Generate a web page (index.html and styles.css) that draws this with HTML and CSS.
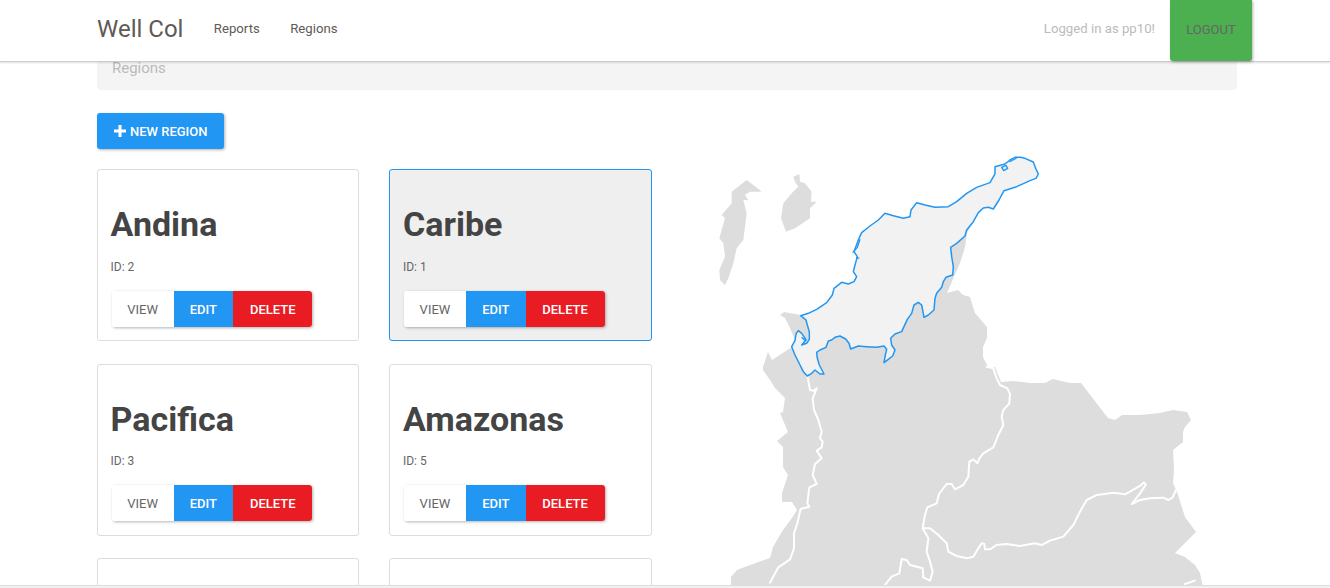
FILE: index.html
```html
<!DOCTYPE html>
<html lang="en">
<head>
<meta charset="utf-8">
<title>Well Col</title>
<link rel="stylesheet" href="styles.css">
</head>
<body>
<nav class="navbar">
  <div class="nav-inner">
    <a class="brand">Well Col</a>
    <a class="nav-link">Reports</a>
    <a class="nav-link">Regions</a>
    <span class="spacer"></span>
    <span class="logged">Logged in as pp10!</span>
    <a class="logout">LOGOUT</a>
  </div>
</nav>
<main class="page">
  <div class="crumb">Regions</div>
  <a class="new-btn"><svg class="plus" viewBox="0 0 12 12"><path d="M4.5 0h3v4.5H12v3H7.5V12h-3V7.5H0v-3h4.5z"/></svg>NEW REGION</a>
  <div class="content">
    <section class="cards">
      <article class="card">
        <h2>Andina</h2><p>ID: 2</p>
        <div class="btns"><a class="b view">VIEW</a><a class="b edit">EDIT</a><a class="b del">DELETE</a></div>
      </article>
      <article class="card active">
        <h2>Caribe</h2><p>ID: 1</p>
        <div class="btns"><a class="b view">VIEW</a><a class="b edit">EDIT</a><a class="b del">DELETE</a></div>
      </article>
      <article class="card">
        <h2>Pacifica</h2><p>ID: 3</p>
        <div class="btns"><a class="b view">VIEW</a><a class="b edit">EDIT</a><a class="b del">DELETE</a></div>
      </article>
      <article class="card">
        <h2>Amazonas</h2><p>ID: 5</p>
        <div class="btns"><a class="b view">VIEW</a><a class="b edit">EDIT</a><a class="b del">DELETE</a></div>
      </article>
      <article class="card"></article>
      <article class="card"></article>
    </section>
    <svg class="map" viewBox="682 150 555 438">
      <g transform="translate(700 150) scale(.33333)">
        <path class="land" d="M140 90L160 105 185 125 150 125 135 135 145 150 130 150 140 190 130 270 110 295 100 340 85 385 75 405 60 390 58 360 75 320 70 280 58 265 75 205 65 195 95 160 95 125Z"/>
        <path class="land" d="M280 80L298 72 300 95 315 100 335 125 333 155 350 155 330 175 330 205 285 235 258 245 243 205 250 160 275 130 295 110 285 95Z"/>
      </g>
      <path class="land" d="M985 208L978 213 967 233 965 247 960 263 947 293 958 290 963 295 970 297 975 313 987 327 987 338 983 347 983 357 988 367 995 367 1001 382 1013 381 1030 383 1045 383 1053 379 1070 383 1081 383 1108 418 1115 420 1122 415 1140 415 1160 413 1173 410 1187 412 1191 420 1185 427 1183 432 1183 442 1173 450 1174 470 1173 483 1177 492 1185 517 1196 532 1175 553 1185 557 1195 565 1200 573 1203 588 731 588 731 577 737 570 750 565 770 558 773 547 783 530 792 518 797 510 792 502 782 502 782 493 788 475 783 467 783 447 777 441 788 432 780 413 783 412 785 398 775 388 772 383 763 370 763 367 768 352 772 360 792 347 795 340 790 328 785 318 780 315 784 312 830 320 900 270Z"/>
      <g transform="translate(720 360) scale(.33333)">
        <path class="river" d="M262 45L270 90 282 92 290 85 278 115 282 150 295 180 305 215 300 235 308 245 305 262 290 272 305 295 285 312 278 345 290 372 268 382 262 430 268 440 242 447 232 490 222 520 222 565 210 598 175 622 150 668"/>
        <path class="river" d="M800 20L820 25 830 55 840 75 862 85 870 102 868 130 850 150 845 170 850 195 835 225 820 262 790 280 778 295 772 310 760 298 748 305 745 350 730 375 705 388 695 372 680 372 657 402 650 430 622 442 615 465 608 505 625 535 620 575 630 605 638 635 630 662 610 652 608 625 570 615 560 600 545 597 538 640 515 650 495 675"/>
        <path class="river" d="M610 505L630 505 655 525 680 550 685 575 710 588 740 595 760 590 775 565 785 550 793 552 795 568 810 568 830 555 860 552 900 558 945 550 965 555 990 542 1030 530 1060 495 1080 455 1100 420 1130 405 1180 398 1215 403 1260 378 1272 367 1278 373 1260 400 1235 432 1260 420 1290 415 1330 413 1345 420 1358 412 1368 390"/>
        <path class="river" d="M1395 672L1425 662"/>
      </g>
      <g transform="translate(700 150) scale(.33333)">
        <path class="caribe" d="M945 22L960 22 975 25 1000 36 1007 55 1015 72 1008 85 990 92 950 110 912 122 897 150 880 177 865 172 850 174 835 188 820 215 800 240 795 258 770 280 752 292 755 320 760 350 758 375 738 382 730 395 725 412 710 430 705 445 702 480 685 495 672 502 668 480 665 465 655 457 642 465 635 490 622 508 612 530 605 545 585 552 572 565 575 585 585 600 578 618 565 628 552 638 556 615 560 598 552 588 530 592 500 590 475 588 452 597 447 580 437 567 420 558 405 562 395 570 385 573 378 592 360 600 350 607 352 625 358 645 372 672 360 672 345 660 335 670 322 678 310 665 300 645 285 615 275 590 285 572 288 552 295 542 305 550 312 560 318 570 305 585 320 580 328 568 328 545 322 525 318 510 302 497 325 490 350 478 380 458 397 435 402 415 425 397 445 402 462 395 470 380 460 365 465 345 472 320 462 305 475 270 485 248 510 228 535 210 555 190 580 197 610 205 630 200 633 180 650 158 675 165 705 172 745 170 770 155 800 130 830 112 870 98 885 72 885 50 915 42 930 30Z"/>
        <path class="islet" d="M905 52L918 46 923 55 911 62ZM928 36L950 24M458 308L472 292 480 268M468 322L478 325M305 562L316 572"/>
      </g>
    </svg>
  </div>
</main>
<div class="bottom-bar"></div>
</body>
</html>
```
FILE: styles.css
```css
* { box-sizing: border-box; }
html, body { height: 100%; }
body {
  margin: 0;
  height: 588px;
  overflow: hidden;
  font-family: Roboto, "Liberation Sans", sans-serif;
  color: #555;
  background: #fff;
}
a { text-decoration: none; }
.navbar {
  position: absolute;
  top: 0; left: 0; right: 0;
  height: 62px;
  background: #fff;
  border-bottom: 1px solid #ccc;
  box-shadow: 0 1px 2px rgba(0,0,0,.12);
  z-index: 5;
}
.nav-inner {
  display: flex;
  align-items: flex-start;
  height: 61px;
  padding-left: 97px;
  padding-right: 78px;
}
.brand { font-size: 24px; line-height: 58px; color: #5f5a56; margin-right: 30.4px; }
.nav-link { font-size: 13.2px; line-height: 58px; color: #5f5a56; margin-right: 30.4px; }
.spacer { flex: 1; }
.logged { font-size: 13.2px; line-height: 58px; color: #bbb; margin-right: 15px; }
.logout {
  width: 82px;
  height: 61px;
  line-height: 60px;
  text-align: center;
  font-size: 13px;
  color: #666;
  background: #4caf50;
  border-radius: 0 0 3px 3px;
  box-shadow: 1px 1px 3px rgba(0,0,0,.3);
}
.page { padding: 46px 93px 0 97px; }
.crumb {
  height: 44px;
  line-height: 44px;
  padding-left: 15px;
  font-size: 15px;
  color: #bbb;
  background: #f4f4f4;
  border-radius: 4px;
}
.new-btn {
  display: inline-flex;
  align-items: center;
  margin-top: 23px;
  width: 127px;
  height: 36px;
  padding-left: 17px;
  font-size: 13px;
  font-weight: 500;
  color: #fff;
  background: #2196f3;
  border-radius: 3px;
  box-shadow: 1px 1px 3px rgba(0,0,0,.3);
}
.plus { width: 12px; height: 12px; margin-right: 4px; fill: #fff; }
.content { display: flex; margin-top: 20.4px; }
.cards {
  display: grid;
  grid-template-columns: 262.4px 262.6px;
  grid-auto-rows: 172px;
  column-gap: 30px;
  row-gap: 22.5px;
  width: 555px;
  flex: none;
}
.card {
  border: 1px solid #ddd;
  border-radius: 3px;
  padding: 34px 12.6px 0;
  background: #fff;
}
.card.active { background: #efefef; border-color: #2196f3; }
.card h2 { margin: 0; font-size: 34px; line-height: 40px; font-weight: 700; color: #444; }
.card p { margin: 14.4px 0 0; font-size: 12px; line-height: 16px; color: #666; }
.btns {
  display: flex;
  width: max-content;
  height: 36px;
  margin: 16px 0 0 1px;
  border-radius: 3px;
  box-shadow: 1px 1px 3px rgba(0,0,0,.3);
}
.b { display: block; height: 36px; line-height: 37px; font-size: 13px; text-align: center; }
.view { width: 62px; background: #fff; color: #666; border-radius: 3px 0 0 3px; }
.edit { width: 59.6px; background: #2196f3; color: #fff; font-weight: 500; }
.del { width: 79px; background: #e91c24; color: #fff; font-weight: 500; border-radius: 0 3px 3px 0; }
.map { display: block; width: 555px; height: 438px; margin-top: -19.4px; margin-left: 30px; flex: none; }
.land { fill: #ddd; }
.river { fill: none; stroke: #fff; stroke-width: 6; stroke-linejoin: round; stroke-linecap: round; }
.caribe { fill: #f2f2f2; stroke: #2196f3; stroke-width: 4.5; stroke-linejoin: round; }
.islet { fill: none; stroke: #2196f3; stroke-width: 4; stroke-linejoin: round; }
.bottom-bar {
  position: absolute;
  left: 0; right: 0; top: 585px;
  height: 3px;
  background: #f1f1f1;
  border-top: 1px solid #ddd;
  z-index: 6;
}
```
